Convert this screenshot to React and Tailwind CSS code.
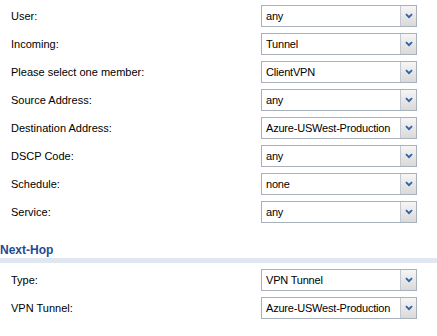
import { useState } from 'react'

const ROWS = [
  { label: 'User:', value: 'any' },
  { label: 'Incoming:', value: 'Tunnel' },
  { label: 'Please select one member:', value: 'ClientVPN' },
  { label: 'Source Address:', value: 'any' },
  { label: 'Destination Address:', value: 'Azure-USWest-Production' },
  { label: 'DSCP Code:', value: 'any' },
  { label: 'Schedule:', value: 'none' },
  { label: 'Service:', value: 'any' },
]

const NEXT_HOP = [
  { label: 'Type:', value: 'VPN Tunnel' },
  { label: 'VPN Tunnel:', value: 'Azure-USWest-Production' },
]

function Chevron() {
  return (
    <svg width="8" height="6" viewBox="0 0 8 6">
      <path d="M1 1.2 L4 4.2 L7 1.2" fill="none" stroke="#2f5fa6" strokeWidth="1.8" />
    </svg>
  )
}

function Select({ value }) {
  return (
    <div className="flex h-[22px] w-[156px] border border-[#a9b1bd] bg-white">
      <span className="flex flex-1 items-center overflow-hidden whitespace-nowrap pl-[4px] text-[11px] tracking-[-0.2px] text-black">{value}</span>
      <span className="flex w-[16px] items-center justify-center border-l border-[#c3c8d0] bg-gradient-to-b from-[#f6f6f6] to-[#d9d9d9]">
        <Chevron />
      </span>
    </div>
  )
}

function Row({ label, value }) {
  return (
    <div className="flex h-[28px] items-center">
      <span className="w-[261px] pl-[11px] text-[11px] text-black">{label}</span>
      <Select value={value} />
    </div>
  )
}

export default function App() {
  const [rows] = useState(ROWS)
  return (
    <div className="h-[336px] w-[437px] overflow-hidden bg-white pt-[2px] font-['Tahoma','Liberation_Sans',sans-serif]">
      {rows.map((r) => (
        <Row key={r.label} {...r} />
      ))}

      <div className="mt-[17px]">
        <p className="text-[12px] font-bold leading-[14px] text-[#1f4a92]">Next-Hop</p>
        <div className="mt-[1px] h-[5px] bg-[#e0e7f1]" />
      </div>

      <div className="pt-[3px]">
        {NEXT_HOP.map((r) => (
          <Row key={r.label} {...r} />
        ))}
      </div>
    </div>
  )
}
